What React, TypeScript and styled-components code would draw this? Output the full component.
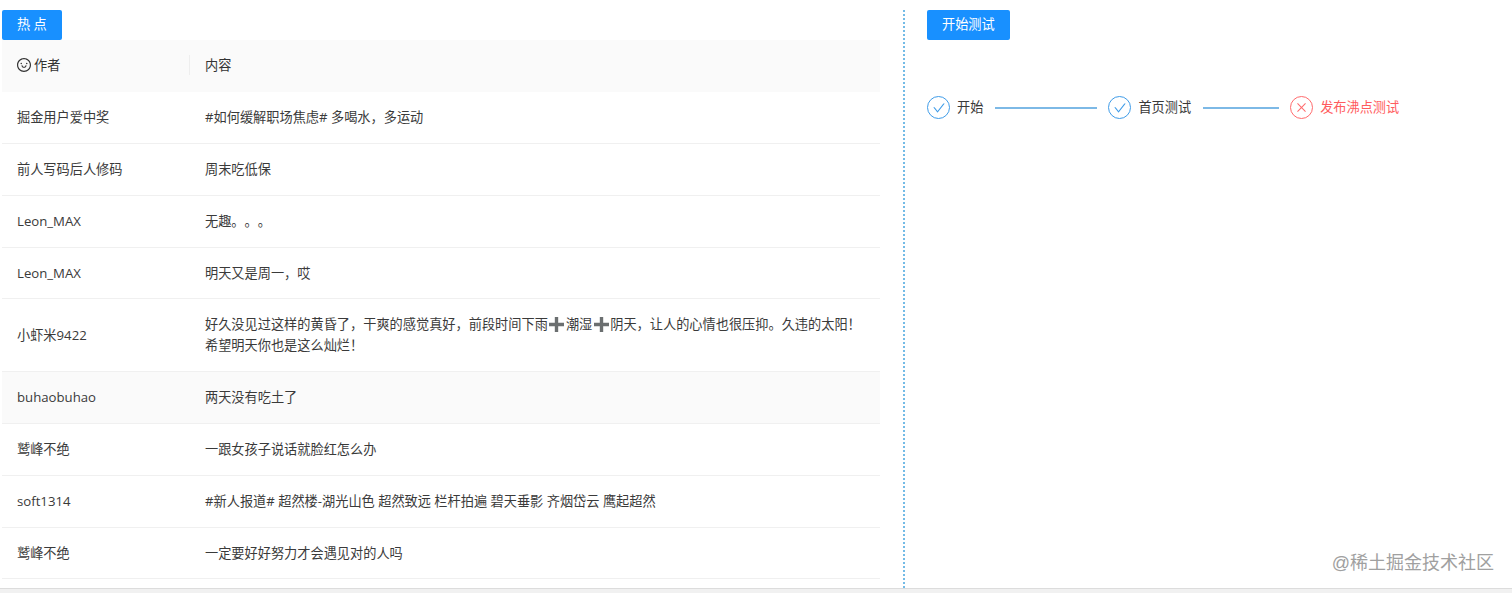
import React from "react";
import styled, { createGlobalStyle } from "styled-components";
import { AiOutlineCheck, AiOutlineClose, AiOutlineSmile } from "react-icons/ai";

const posts = [
    { author: "掘金用户爱中奖", content: "#如何缓解职场焦虑# 多喝水，多运动" },
    { author: "前人写码后人修码", content: "周末吃低保" },
    { author: "Leon_MAX", content: "无趣。。。" },
    { author: "Leon_MAX", content: "明天又是周一，哎" },
    {
        author: "小虾米9422",
        content: (
            <>
                好久没见过这样的黄昏了，干爽的感觉真好，前段时间下雨
                <PlusEmoji />
                潮湿
                <PlusEmoji />
                阴天，让人的心情也很压抑。久违的太阳！希望明天你也是这么灿烂！
            </>
        ),
    },
    { author: "buhaobuhao", content: "两天没有吃土了", hovered: true },
    { author: "鹫峰不绝", content: "一跟女孩子说话就脸红怎么办" },
    { author: "soft1314", content: "#新人报道# 超然楼-湖光山色 超然致远 栏杆拍遍 碧天垂影 齐烟岱云 鹰起超然" },
    { author: "鹫峰不绝", content: "一定要好好努力才会遇见对的人吗" },
];

function PlusEmoji() {
    return (
        <PlusIcon viewBox="0 0 16 16">
            <path d="M6.2 0h3.6v6.2H16v3.6H9.8V16H6.2V9.8H0V6.2h6.2z" fill="#6b6f70" />
        </PlusIcon>
    );
}

export default function App() {
    return (
        <Page>
            <GlobalStyle />
            <Main>
                <HotPanel>
                    <PrimaryButton>热 点</PrimaryButton>
                    <HeadRow>
                        <AuthorHead>
                            <AiOutlineSmile size={16} color="#333" />
                            作者
                        </AuthorHead>
                        <ContentHead>内容</ContentHead>
                    </HeadRow>
                    {posts.map((post, index) => (
                        <Row key={index} $hovered={post.hovered}>
                            <Cell>{post.author}</Cell>
                            <Cell>{post.content}</Cell>
                        </Row>
                    ))}
                </HotPanel>
                <TestPanel>
                    <PrimaryButton>开始测试</PrimaryButton>
                    <Steps>
                        <StepIcon>
                            <AiOutlineCheck size={14} />
                        </StepIcon>
                        <StepTitle>开始</StepTitle>
                        <StepLine $width={102} />
                        <StepIcon>
                            <AiOutlineCheck size={14} />
                        </StepIcon>
                        <StepTitle>首页测试</StepTitle>
                        <StepLine $width={76} />
                        <StepIcon $error>
                            <AiOutlineClose size={13} />
                        </StepIcon>
                        <StepTitle $error>发布沸点测试</StepTitle>
                    </Steps>
                </TestPanel>
            </Main>
            <BottomBar />
            <Watermark>@稀土掘金技术社区</Watermark>
        </Page>
    );
}

const GlobalStyle = createGlobalStyle`
    html, body {
        margin: 0;
        padding: 0;
        background: #fff;
    }
    body {
        font-family: "Open Sans", "Noto Sans CJK SC", sans-serif;
        font-size: 13.2px;
        color: #3a3a3a;
        text-spacing-trim: space-all;
    }
`;
const Page = styled.div`
    position: relative;
    display: flex;
    flex-direction: column;
    width: 1512px;
    height: 593px;
    overflow: hidden;
`;
const Main = styled.div`
    flex: 1;
    display: flex;
    padding-top: 10px;
    min-height: 0;
`;
const HotPanel = styled.div`
    width: 878px;
    margin-left: 2px;
    margin-right: 23px;
    flex-shrink: 0;
`;
const TestPanel = styled.div`
    flex: 1;
    padding-left: 22px;
    border-left: 2px dotted #74bbe6;
`;
const PrimaryButton = styled.button`
    display: block;
    height: 30px;
    padding: 0 15px 2px;
    border: none;
    border-radius: 2px;
    background: #1890ff;
    color: #fff;
    font: inherit;
    line-height: 28px;
`;
const HeadRow = styled.div`
    display: grid;
    grid-template-columns: 188px 1fr;
    align-items: center;
    height: 52px;
    padding-bottom: 3px;
    box-sizing: border-box;
    background: #fafafa;
    color: #333;
`;
const AuthorHead = styled.div`
    display: flex;
    align-items: center;
    gap: 2px;
    padding-left: 14px;
`;
const ContentHead = styled.div`
    padding-left: 15px;
    border-left: 1px solid #eee;
    margin-left: -1px;
    height: 20px;
    line-height: 20px;
`;
const Row = styled.div<{ $hovered?: boolean }>`
    display: grid;
    grid-template-columns: 188px 1fr;
    align-items: center;
    border-bottom: 1px solid #f0f0f0;
    background: ${({ $hovered }) => ($hovered ? "#fafafa" : "#fff")};
`;
const Cell = styled.div`
    padding: 15px;
    line-height: 20.85px;
`;
const PlusIcon = styled.svg`
    display: inline-block;
    width: 15px;
    height: 15px;
    margin: 0 1.5px;
    vertical-align: -3px;
`;
const Steps = styled.div`
    display: flex;
    align-items: center;
    margin-top: 56px;
    height: 23px;
`;
const StepIcon = styled.span<{ $error?: boolean }>`
    display: flex;
    align-items: center;
    justify-content: center;
    width: 23px;
    height: 23px;
    box-sizing: border-box;
    border: 1px solid ${({ $error }) => ($error ? "#ff6b6d" : "#3f9ce8")};
    border-radius: 50%;
    color: ${({ $error }) => ($error ? "#ff6b6d" : "#3f9ce8")};
`;
const StepTitle = styled.span<{ $error?: boolean }>`
    margin-left: 7px;
    padding-bottom: 3px;
    color: ${({ $error }) => ($error ? "#ff5c5e" : "#3a3a3a")};
`;
const StepLine = styled.span<{ $width: number }>`
    width: ${({ $width }) => $width}px;
    height: 2px;
    margin: 0 11px 0 12px;
    background: #7db9e6;
`;
const BottomBar = styled.div`
    height: 4px;
    flex-shrink: 0;
    border-top: 1px solid #dcdcdc;
    background: #f1f1f1;
`;
const Watermark = styled.div`
    position: absolute;
    right: 18px;
    bottom: 17px;
    font-size: 18px;
    line-height: 25px;
    color: #a0a0a0;
    font-family: "Liberation Sans", "Noto Sans CJK SC", sans-serif;
`;
